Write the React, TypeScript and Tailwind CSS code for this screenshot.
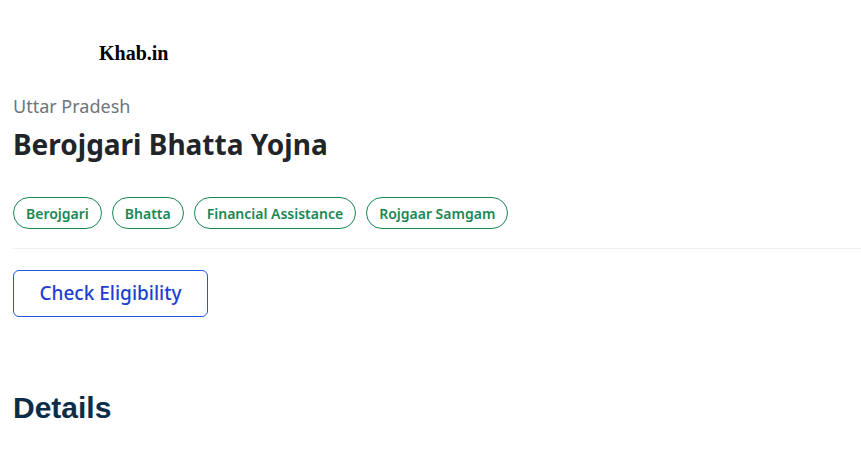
const tags = ["Berojgari", "Bhatta", "Financial Assistance", "Rojgaar Samgam"];

export default function App() {
  return (
    <div className="min-h-screen bg-white pl-[13px] pt-[40px] font-['Noto_Sans',sans-serif]">
      <div className="ml-[86px] font-['Liberation_Serif',serif] text-[20px] font-bold leading-[26px] text-black">
        Khab.in
      </div>

      <p className="mt-[27px] text-[18px] leading-[26px] text-[#6c757d]">Uttar Pradesh</p>
      <h1 className="mt-[6px] text-[28px] font-bold leading-[38px] text-[#212529]">Berojgari Bhatta Yojna</h1>

      <div className="mt-[34px] flex gap-[10px]">
        {tags.map((tag) => (
          <span
            key={tag}
            className="flex h-[32px] items-center rounded-full border border-[#198754] px-[12px] text-[14px] font-semibold text-[#198754]"
          >
            {tag}
          </span>
        ))}
      </div>

      <div className="mt-[19px] border-b border-[#f0f0f0]" />

      <button className="mt-[21px] h-[47px] w-[195px] rounded-[6px] border border-[#2457e0] text-[19px] font-medium text-[#1e40d0]">
        Check Eligibility
      </button>

      <h2 className="mt-[72px] font-['Liberation_Sans',sans-serif] text-[30px] font-bold leading-[38px] text-[#0c2d48]">
        Details
      </h2>
    </div>
  );
}
